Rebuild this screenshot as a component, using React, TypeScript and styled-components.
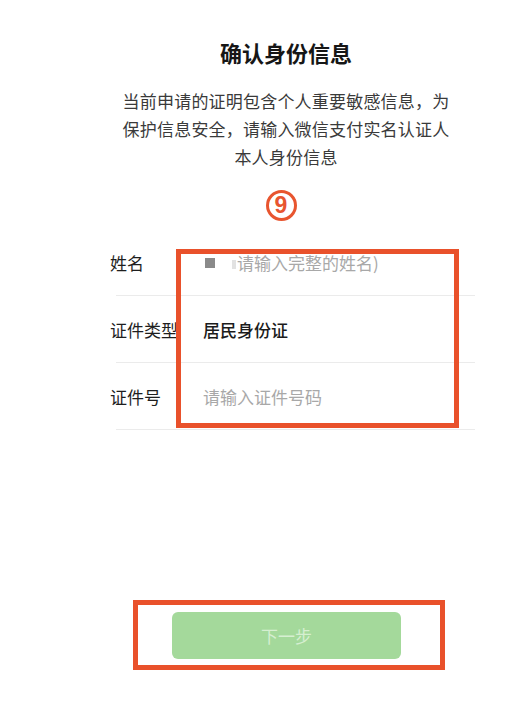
import React from "react";
import styled, { createGlobalStyle } from "styled-components";

const Global = createGlobalStyle`
  html, body { margin: 0; padding: 0; background: #fff; }
  body { font-family: "Noto Sans CJK SC", "Noto Sans", sans-serif; }
`;

const Page = styled.div`
  position: relative;
  width: 512px;
  height: 701px;
  overflow: hidden;
  background: #fff;
  display: flex;
  flex-direction: column;
`;

const Column = styled.div`
  padding-left: 60px;
  display: flex;
  flex-direction: column;
  align-items: center;
`;

const Title = styled.h1`
  margin: 38px 0 0;
  font-size: 22px;
  line-height: 29px;
  font-weight: 700;
  color: #161616;
`;

const Intro = styled.p`
  margin: 20px 0 0;
  width: 332px;
  font-size: 17px;
  letter-spacing: 0.2px;
  line-height: 28px;
  color: #3a3a3a;
  text-align: center;
`;

const Step = styled.div`
  margin: 19px 10px 0 0;
  width: 25px;
  height: 25px;
  border: 3px solid #e8552f;
  border-radius: 50%;
  display: flex;
  align-items: center;
  justify-content: center;
  color: #e8552f;
  font-family: "Liberation Sans", sans-serif;
  font-weight: 700;
  font-size: 23px;
  line-height: 1;
`;

const Form = styled.div`
  margin: 8px 37px 0 116px;
  display: flex;
  flex-direction: column;
`;

const Row = styled.div`
  height: 66px;
  border-bottom: 1px solid #ebebeb;
  display: grid;
  grid-template-columns: 87px 1fr;
  align-items: center;
`;

const Label = styled.span`
  margin-left: -6px;
  font-size: 17px;
  color: #1e1e1e;
  white-space: nowrap;
`;

const Value = styled.span<{ $muted?: boolean }>`
  display: flex;
  align-items: center;
  font-size: 17px;
  color: ${(p) => (p.$muted ? "#a8a8a8" : "#1c1c1c")};
  font-weight: ${(p) => (p.$muted ? 400 : 500)};
  white-space: nowrap;
`;

const Square = styled.span`
  width: 10px;
  height: 10px;
  margin: 2px 0 0 2px;
  background: #8a8a8a;
`;

const Flag = styled.span`
  width: 4px;
  height: 9px;
  margin: 4px 1px 0 17px;
  background: #e2e2e2;
`;

const Spacer = styled.div`
  flex: 1;
`;

const Footer = styled.div`
  padding-left: 60px;
  margin-bottom: 42px;
  display: flex;
  justify-content: center;
`;

const NextButton = styled.button`
  width: 229px;
  height: 47px;
  margin-left: 1px;
  border: none;
  border-radius: 6px;
  background: #a4d99b;
  color: #d6efd1;
  font-family: "Noto Sans CJK SC", sans-serif;
  font-size: 17px;
`;

const Highlight = styled.div<{ $x: number; $y: number; $w: number; $h: number }>`
  position: absolute;
  left: ${(p) => p.$x}px;
  top: ${(p) => p.$y}px;
  width: ${(p) => p.$w}px;
  height: ${(p) => p.$h}px;
  box-sizing: border-box;
  border: 5px solid #e9512b;
  pointer-events: none;
`;

export default function App() {
  return (
    <>
      <Global />
      <Page>
        <Column>
          <Title>确认身份信息</Title>
          <Intro>
            当前申请的证明包含个人重要敏感信息，为保护信息安全，请输入微信支付实名认证人本人身份信息
          </Intro>
          <Step>9</Step>
        </Column>
        <Form>
          <Row>
            <Label>姓名</Label>
            <Value $muted>
              <Square />
              <Flag />
              请输入完整的姓名)
            </Value>
          </Row>
          <Row>
            <Label>证件类型</Label>
            <Value>居民身份证</Value>
          </Row>
          <Row>
            <Label>证件号</Label>
            <Value $muted>请输入证件号码</Value>
          </Row>
        </Form>
        <Spacer />
        <Footer>
          <NextButton>下一步</NextButton>
        </Footer>
        <Highlight $x={176} $y={249} $w={283} $h={179} />
        <Highlight $x={133} $y={600} $w={312} $h={70} />
      </Page>
    </>
  );
}
